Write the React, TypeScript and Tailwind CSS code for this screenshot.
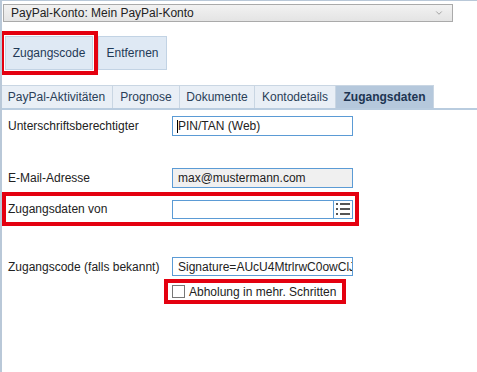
import { ChevronDown } from 'lucide-react';

const font = { fontFamily: '"Liberation Sans", Arial, sans-serif' };

function ListIcon() {
  return (
    <svg width="14" height="12" viewBox="0 0 14 12">
      <rect x="0" y="0" width="2" height="2" fill="#555" />
      <rect x="4" y="0" width="10" height="2" fill="#555" />
      <rect x="0" y="5" width="2" height="2" fill="#555" />
      <rect x="4" y="5" width="10" height="2" fill="#555" />
      <rect x="0" y="10" width="2" height="2" fill="#555" />
      <rect x="4" y="10" width="10" height="2" fill="#555" />
    </svg>
  );
}

export default function App() {
  const tabs = ['PayPal-Aktivitäten', 'Prognose', 'Dokumente', 'Kontodetails', 'Zugangsdaten'];
  const tabWidths = ['w-[113px]', 'w-[67px]', 'w-[75px]', 'w-[81px]', 'w-[98px]'];

  return (
    <div
      className="w-[477px] h-[372px] bg-white border-l-2 border-t border-[#b9c8d8] text-[12px] text-[#222] overflow-hidden"
      style={font}
    >
      {/* Konto-Auswahl */}
      <div className="pt-[3px] pl-[1px]">
        <div className="w-[450px] h-[18px] border border-[#aaaaaa] bg-gradient-to-b from-[#f2f2f2] to-[#e4e4e4] flex items-center pl-[7px] pr-[8px]">
          <span className="flex-1 leading-none">PayPal-Konto: Mein PayPal-Konto</span>
          <ChevronDown size={10} strokeWidth={1.5} className="text-[#777]" />
        </div>
      </div>

      {/* Buttons */}
      <div className="flex items-start mt-[9px] ml-[-2px]">
        <div className="border-4 border-[#e4000f] p-[1px]">
          <button className="h-[34px] w-[88px] bg-[#dfe9f4] border border-[#c2d3e4] text-[#1f3a57] text-[12px] flex items-center justify-center">
            Zugangscode
          </button>
        </div>
        <button className="h-[34px] w-[69px] mt-[5px] bg-[#dfe9f4] border border-[#c2d3e4] text-[#1f3a57] text-[12px] flex items-center justify-center">
          Entfernen
        </button>
      </div>

      {/* Tabs */}
      <div className="mt-[10px] flex border-b-2 border-[#b9ccdf] ml-[-2px]">
        {tabs.map((t, i) => (
          <div
            key={t}
            className={
              'h-[23px] flex items-center justify-center border-r border-t border-[#c9d6e3] ' +
              tabWidths[i] +
              (i === 4
                ? ' bg-[#b5c8dc] font-bold text-[#1d3552]'
                : ' bg-[#e9eff6] text-[#2a4058]') +
              (i === 0 ? ' border-l' : '')
            }
          >
            {t}
          </div>
        ))}
      </div>

      {/* Formular */}
      <div className="pt-[6px]">
        <div className="flex items-center h-[20px]">
          <span className="w-[170px] pl-[6px]">Unterschriftsberechtigter</span>
          <div className="w-[181px] h-[20px] border border-[#5b9bd5] bg-white flex items-center pl-[4px]">
            <span className="border-l border-black leading-[13px]">PIN/TAN (Web)</span>
          </div>
        </div>

        <div className="flex items-center h-[20px] mt-[32px]">
          <span className="w-[170px] pl-[6px]">E-Mail-Adresse</span>
          <div className="w-[181px] h-[20px] border border-[#5b9bd5] bg-[#f0f0f0] flex items-center pl-[5px]">
            max@mustermann.com
          </div>
        </div>

        <div className="flex items-center h-[34px] mt-[4px] ml-0 w-[357px] border-4 border-[#e4000f]">
          <span className="w-[166px] pl-[2px]">Zugangsdaten von</span>
          <div className="w-[181px] h-[19px] border border-[#5b9bd5] bg-white flex">
            <div className="flex-1" />
            <div className="w-[19px] border-l border-[#5b9bd5] flex items-center justify-center">
              <ListIcon />
            </div>
          </div>
        </div>

        <div className="flex items-center h-[19px] mt-[31px]">
          <span className="w-[170px] pl-[6px] whitespace-nowrap">Zugangscode (falls bekannt)</span>
          <div className="w-[181px] h-[19px] border border-[#5b9bd5] bg-white flex items-center pl-[5px] overflow-hidden whitespace-nowrap">
            Signature=AUcU4MtrlrwC0owClJ
          </div>
        </div>

        <div className="ml-[162px] mt-[3px] w-[182px] h-[25px] border-4 border-[#e4000f] flex items-center pl-[4px]">
          <div className="w-[13px] h-[13px] border border-[#777] bg-white mr-[4px]" />
          <span>Abholung in mehr. Schritten</span>
        </div>
      </div>
    </div>
  );
}
